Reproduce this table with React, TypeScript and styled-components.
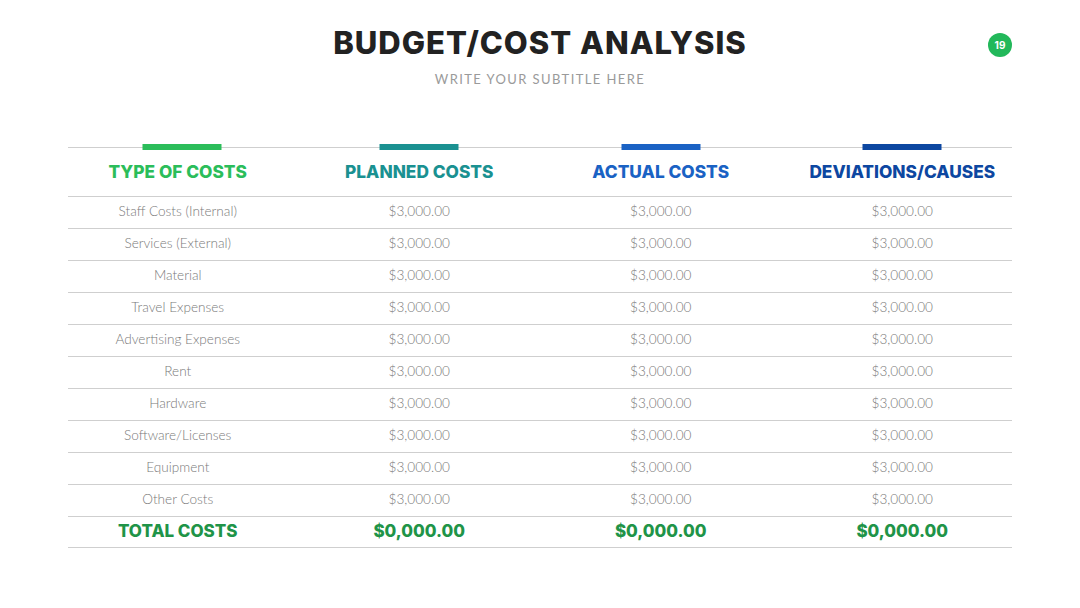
import React from "react";
import styled, { createGlobalStyle } from "styled-components";

const Global = createGlobalStyle`
  html, body { margin: 0; padding: 0; background: #ffffff; }
  body { width: 1080px; height: 608px; overflow: hidden; }
`;

const Page = styled.div`
  position: relative;
  width: 1080px;
  height: 608px;
  background: #fff;
  display: flex;
  flex-direction: column;
  align-items: center;
  box-sizing: border-box;
  padding-top: 25px;
`;

const Title = styled.h1`
  margin: 0;
  font-family: Inter, "Open Sans", sans-serif;
  font-weight: 800;
  font-size: 31px;
  line-height: 36px;
  color: #222222;
  letter-spacing: 1px;
`;

const Subtitle = styled.div`
  margin-top: 10px;
  font-family: Lato, "Open Sans", sans-serif;
  font-weight: 400;
  font-size: 13px;
  line-height: 16px;
  letter-spacing: 1.4px;
  color: #9a9a9a;
`;

const Badge = styled.div`
  position: absolute;
  top: 33px;
  left: 988px;
  width: 24px;
  height: 24px;
  border-radius: 50%;
  background: #22b85a;
  color: #fff;
  display: flex;
  align-items: center;
  justify-content: center;
  font-family: Inter, sans-serif;
  font-weight: 700;
  font-size: 10px;
`;

const Table = styled.div`
  margin-top: 60px;
  width: 944px;
  border-top: 1px solid #cfcfcf;
  display: flex;
  flex-direction: column;
`;

const Row = styled.div<{ $h: number }>`
  height: ${(p) => p.$h}px;
  border-bottom: 1px solid #cfcfcf;
  box-sizing: border-box;
`;

const Cells = styled.div`
  height: 100%;
  margin: 0 -11px;
  display: grid;
  grid-template-columns: repeat(4, 1fr);
  align-items: center;
`;

const HeadCell = styled.div<{ $c: string }>`
  position: relative;
  height: 100%;
  display: flex;
  align-items: center;
  justify-content: center;
  font-family: Inter, sans-serif;
  font-weight: 800;
  font-size: 17.3px;
  color: ${(p) => p.$c};
  padding-bottom: 2px;
  box-sizing: border-box;
`;

const Accent = styled.span<{ $c: string; $shift: number }>`
  position: absolute;
  top: -4px;
  left: calc(50% + ${(p) => p.$shift}px);
  width: 79px;
  height: 6px;
  transform: translateX(-50%);
  background: ${(p) => p.$c};
`;

const Cell = styled.div`
  text-align: center;
  font-family: Lato, sans-serif;
  font-weight: 300;
  font-size: 13.6px;
  color: #7a7a7a;
  padding-bottom: 3px;
`;

const TotalCell = styled.div`
  text-align: center;
  font-family: Inter, sans-serif;
  font-weight: 800;
  font-size: 17px;
  color: #1f9448;
  padding-bottom: 2px;
`;

const headers = [
  { t: "TYPE OF COSTS", c: "#2bbd5a", s: 4 },
  { t: "PLANNED COSTS", c: "#1a9191", s: 0 },
  { t: "ACTUAL COSTS", c: "#1a62c4", s: 0 },
  { t: "DEVIATIONS/CAUSES", c: "#0d47a1", s: 0 },
];

const items = [
  "Staff Costs (Internal)",
  "Services (External)",
  "Material",
  "Travel Expenses",
  "Advertising Expenses",
  "Rent",
  "Hardware",
  "Software/Licenses",
  "Equipment",
  "Other Costs",
];

export default function App() {
  return (
    <>
      <Global />
      <Page>
        <Title>BUDGET/COST ANALYSIS</Title>
        <Subtitle>WRITE YOUR SUBTITLE HERE</Subtitle>
        <Badge>19</Badge>
        <Table>
          <Row $h={49}>
            <Cells>
              {headers.map((h) => (
                <HeadCell key={h.t} $c={h.c}>
                  <Accent $c={h.c} $shift={h.s} />
                  {h.t}
                </HeadCell>
              ))}
            </Cells>
          </Row>
          {items.map((it) => (
            <Row key={it} $h={32}>
              <Cells>
                <Cell>{it}</Cell>
                <Cell>$3,000.00</Cell>
                <Cell>$3,000.00</Cell>
                <Cell>$3,000.00</Cell>
              </Cells>
            </Row>
          ))}
          <Row $h={31}>
            <Cells>
              <TotalCell>TOTAL COSTS</TotalCell>
              <TotalCell>$0,000.00</TotalCell>
              <TotalCell>$0,000.00</TotalCell>
              <TotalCell>$0,000.00</TotalCell>
            </Cells>
          </Row>
        </Table>
      </Page>
    </>
  );
}
